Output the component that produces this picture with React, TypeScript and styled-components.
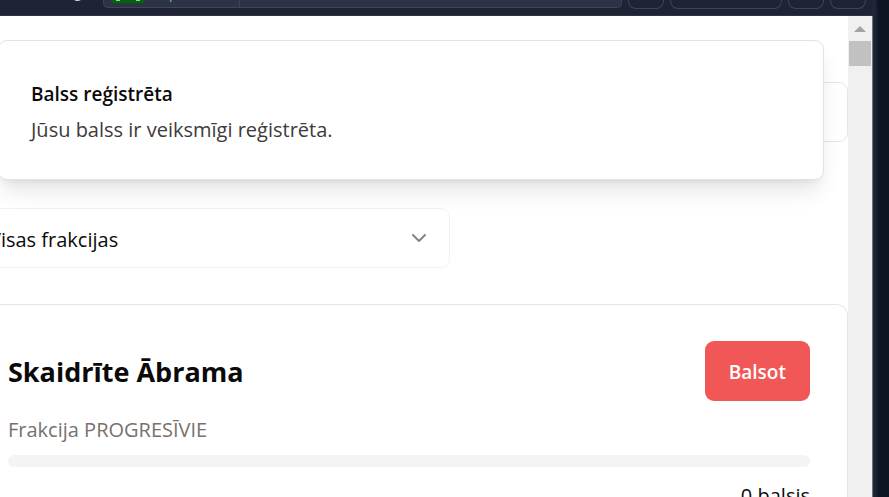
import React from "react";
import styled, { createGlobalStyle } from "styled-components";
import { ChevronDown } from "lucide-react";

const GlobalStyle = createGlobalStyle`
  * { box-sizing: border-box; }
  html, body { margin: 0; overflow: hidden; background: #0f1524; }
  body { font-family: "Segoe UI", "Open Sans", "Noto Sans", sans-serif; color: #0c0a09; }
  button, input { font: inherit; }
`;

const Desktop = styled.div`
  display: flex;
  height: 100vh;
  overflow: hidden;
  background: linear-gradient(to left, #0d1422 10px, #151d2e 12px, #232b3e 16px);
`;

const BrowserWindow = styled.div`
  flex: 1;
  min-width: 0;
  margin-right: 16px;
  display: flex;
  flex-direction: column;
  position: relative;
`;

const Toolbar = styled.header`
  height: 16px;
  flex: none;
  display: flex;
  align-items: flex-start;
  gap: 6px;
  padding: 0 7px 0 74px;
  background: #1e2433;
  border-bottom: 1px solid #2d3245;
  overflow: hidden;
`;

const CutLabel = styled.span`
  width: 23px;
  margin-top: -17px;
  font-size: 14px;
  line-height: 18px;
  color: #c5cad6;
`;

const AddressBar = styled.div`
  flex: 1;
  height: 8px;
  display: flex;
  background: #2d3246;
  border: 1px solid #3b455c;
  border-top: 0;
  border-radius: 0 0 5px 5px;
`;

const AddressTag = styled.div`
  width: 136px;
  height: 7px;
  display: flex;
  padding-left: 7px;
  border-right: 1px solid #3b455c;
`;

const Badge = styled.span`
  width: 34px;
  height: 3px;
  display: flex;
  justify-content: space-between;
  padding: 0 5px;
  background: #05640b;
  border-radius: 0 0 8px 8px;
`;

const BadgeMark = styled.i`
  width: 4px;
  height: 1px;
  background: #7fe38a;
`;

const TagText = styled.span`
  margin: -16px 0 0 24px;
  font-size: 14px;
  line-height: 18px;
  color: #4ade5a;
`;

const ToolButton = styled.button<{ $wide?: boolean }>`
  width: ${(p) => (p.$wide ? 112 : 36)}px;
  height: 9px;
  padding: 0;
  background: transparent;
  border: 1px solid #3b455c;
  border-top: 0;
  border-radius: 0 0 8px 8px;
`;

const Viewport = styled.div`
  flex: 1;
  min-height: 0;
  display: flex;
  border-right: 1px solid #6b7280;
`;

const Page = styled.main`
  flex: 1;
  min-width: 0;
  overflow: hidden;
  padding-top: 66px;
  background: #fff;
`;

const SearchInput = styled.input`
  display: block;
  width: 100%;
  height: 60px;
  background: #fff;
  border: 1px solid #e7e5e4;
  border-left: 0;
  border-radius: 0 9px 9px 0;
`;

const FilterButton = styled.button`
  display: flex;
  align-items: center;
  justify-content: space-between;
  width: calc(50% + 26px);
  height: 60px;
  margin: 66px 0 36px;
  padding: 0 18px 0 0;
  background: transparent;
  border: 1px solid #f3f2f2;
  border-left: 0;
  border-radius: 0 9px 9px 0;
  font-size: 20px;
  color: #0c0a09;
`;

const FilterText = styled.span`
  margin-left: -11px;
  padding-top: 2px;
`;

const Card = styled.article`
  padding: 36px 37px 36px 8px;
  background: #fff;
  border: 1px solid #e7e5e4;
  border-left: 0;
  border-radius: 0 12px 0 0;
`;

const CardHeader = styled.div`
  display: flex;
  align-items: center;
  justify-content: space-between;
`;

const Name = styled.h2`
  margin: 0;
  padding-top: 2px;
  font-size: 27px;
  line-height: 36px;
  font-weight: 700;
`;

const VoteButton = styled.button`
  height: 60px;
  padding: 2px 24px 0;
  background: #f15757;
  color: #fff;
  border: 0;
  border-radius: 9px;
  font-size: 19px;
  font-weight: 600;
`;

const Faction = styled.p`
  margin: 14px 0 10px;
  font-size: 20px;
  line-height: 30px;
  color: #78716c;
`;

const Progress = styled.div`
  height: 12px;
  border-radius: 6px;
  background: #f4f4f3;
`;

const Votes = styled.p`
  margin: 14px 0 0;
  font-size: 20px;
  line-height: 30px;
  text-align: right;
`;

const Toast = styled.section`
  position: absolute;
  top: 40px;
  left: -2px;
  right: 49px;
  padding: 38px 32px 34px;
  background: #fff;
  border: 1px solid #e2e2e2;
  border-radius: 9px;
  box-shadow: 0 15px 22px -4px rgba(0, 0, 0, 0.1), 0 6px 9px -6px rgba(0, 0, 0, 0.1);
`;

const ToastTitle = styled.h3`
  margin: 0 0 6px;
  font-size: 19px;
  line-height: 30px;
  font-weight: 600;
`;

const ToastText = styled.p`
  margin: 0;
  font-size: 20px;
  line-height: 30px;
  color: #3d3b3a;
`;

const ScrollTrack = styled.div`
  width: 24px;
  display: flex;
  flex-direction: column;
  align-items: center;
  padding: 10px 1px 0;
  background: #f0f0f0;
`;

const Thumb = styled.div`
  width: 22px;
  height: 25px;
  margin-top: 9px;
  background: #c1c1c1;
`;

export default function App() {
  return (
    <>
      <GlobalStyle />
      <Desktop>
        <BrowserWindow>
          <Toolbar>
            <CutLabel>g</CutLabel>
            <AddressBar>
              <AddressTag>
                <Badge>
                  <BadgeMark />
                  <BadgeMark />
                </Badge>
                <TagText>p</TagText>
              </AddressTag>
            </AddressBar>
            <ToolButton aria-label="Back" />
            <ToolButton $wide aria-label="Zoom" />
            <ToolButton aria-label="Forward" />
            <ToolButton aria-label="Menu" />
          </Toolbar>
          <Viewport>
            <Page>
              <SearchInput aria-label="Meklēt" />
              <FilterButton>
                <FilterText>Visas frakcijas</FilterText>
                <ChevronDown size={24} strokeWidth={2} color="#858484" />
              </FilterButton>
              <Card>
                <CardHeader>
                  <Name>Skaidrīte Ābrama</Name>
                  <VoteButton>Balsot</VoteButton>
                </CardHeader>
                <Faction>Frakcija PROGRESĪVIE</Faction>
                <Progress role="progressbar" aria-valuenow={0} aria-label="Balsis" />
                <Votes>0 balsis</Votes>
              </Card>
            </Page>
            <ScrollTrack>
              <svg width="12" height="6" viewBox="0 0 12 6">
                <path d="M0 6 6 0 12 6Z" fill="#a3a3a3" />
              </svg>
              <Thumb />
            </ScrollTrack>
          </Viewport>
          <Toast role="status">
            <ToastTitle>Balss reģistrēta</ToastTitle>
            <ToastText>Jūsu balss ir veiksmīgi reģistrēta.</ToastText>
          </Toast>
        </BrowserWindow>
      </Desktop>
    </>
  );
}
